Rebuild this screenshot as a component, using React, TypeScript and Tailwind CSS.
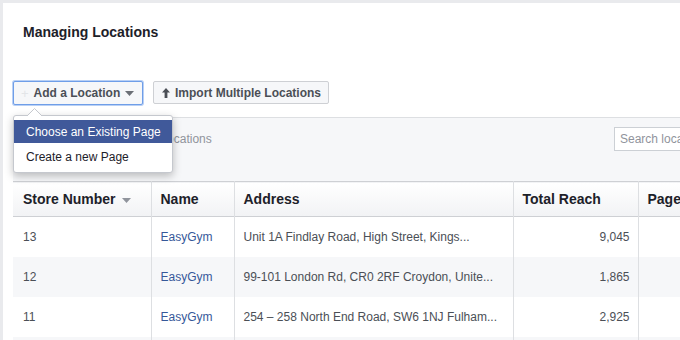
import React from 'react';

const font = { fontFamily: '"Liberation Sans", Arial, Helvetica, sans-serif' };

type Row = { store: string; name: string; address: string; reach: string };

const ROWS: Row[] = [
  { store: '13', name: 'EasyGym', address: 'Unit 1A Findlay Road, High Street, Kings...', reach: '9,045' },
  { store: '12', name: 'EasyGym', address: '99-101 London Rd, CR0 2RF Croydon, Unite...', reach: '1,865' },
  { store: '11', name: 'EasyGym', address: '254 – 258 North End Road, SW6 1NJ Fulham...', reach: '2,925' },
  { store: '10', name: 'EasyGym', address: 'Unit 3, Westgate Retail Park, Leeds...', reach: '3,112' },
];

const Caret = ({ className }: { className?: string }) => (
  <svg width="9" height="5" viewBox="0 0 9 5" className={className}>
    <path d="M0 0h9L4.5 5z" fill="currentColor" />
  </svg>
);

export default function App() {
  return (
    <div className="h-[340px] w-[680px] overflow-hidden bg-[#e9eaed] pl-[3px] pt-[3px]" style={font}>
      <div className="h-full w-[900px] bg-white pl-[10px]">
        {/* HEADER */}
        <div className="h-[78px] pl-[10px] pt-[20px]">
          <h1 className="text-[14px] font-bold leading-[18px] text-[#1d2129]">Managing Locations</h1>
        </div>

        {/* ACTIONS */}
        <div className="flex h-[24px] gap-[10px]">
          <div className="relative">
            <button className="flex h-[24px] w-[130px] items-center rounded-[2px] border border-[#6f9ee8] bg-[#f6f7f9] pl-[7px] text-[12px] font-bold text-[#4b4f56] shadow-[0_0_0_1px_#b9d0f5]">
              <span className="mr-[5px] text-[13px] font-normal leading-none text-[#e3e5e8]">+</span>
              Add a Location
              <Caret className="ml-[5px] mt-[1px] text-[#6b6f76]" />
            </button>

            {/* DROPDOWN */}
            <div className="absolute left-0 top-[34px] z-10 w-[160px] rounded-[3px] border border-[#c5c8ce] bg-white py-[4px] shadow-[0_3px_8px_rgba(0,0,0,0.25)]">
              <svg width="15" height="8" viewBox="0 0 15 8" className="absolute left-[13px] top-[-8px]">
                <path d="M0 8L7.5 0.5L15 8" fill="white" stroke="#c5c8ce" />
              </svg>
              <div className="flex h-[23px] items-center bg-[#40599a] pl-[12px] text-[12px] text-white">
                Choose an Existing Page
              </div>
              <div className="mt-[2px] flex h-[23px] items-center pl-[12px] text-[12px] text-[#1d2129]">
                Create a new Page
              </div>
            </div>
          </div>

          <button className="flex h-[23px] w-[176px] items-center rounded-[2px] border border-[#ced0d4] bg-[#f6f7f9] pl-[8px] text-[12px] font-bold text-[#4b4f56]">
            <svg width="8" height="10" viewBox="0 0 8 10" className="mr-[5px]">
              <path d="M4 0L8 4.5H5.4V10H2.6V4.5H0z" fill="#4b4f56" />
            </svg>
            Import Multiple Locations
          </button>
        </div>

        {/* FILTER BAR */}
        <div className="mt-[12px] flex h-[64px] items-start border-t border-[#dddfe2] bg-[#f6f7f9] pt-[9px]">
          <div className="w-[601px] shrink-0 pl-[34px] pt-[4px] text-[12px] leading-[16px] text-[#90949c]">
            Showing 1 - 13 of 13 Locations
          </div>
          <input
            placeholder="Search locations"
            className="h-[24px] w-[170px] border border-[#ccd0d5] bg-white px-[5px] text-[12px] text-[#1d2129] outline-none placeholder:text-[#90949c]"
            style={font}
          />
        </div>

        {/* TABLE */}
        <table className="table-fixed border-collapse text-[12px] text-[#4b4f56]">
          <colgroup>
            <col className="w-[138px]" />
            <col className="w-[83px]" />
            <col className="w-[279px]" />
            <col className="w-[125px]" />
            <col className="w-[140px]" />
          </colgroup>
          <thead>
            <tr className="h-[35px] border-y border-[#ced0d4] bg-gradient-to-b from-white to-[#f2f3f5] text-left text-[14px] font-bold text-[#1d2129]">
              <th className="border-r border-[#dddfe2] pl-[10px]">
                <span className="flex items-center">
                  Store Number
                  <Caret className="ml-[6px] mt-[2px] text-[#90949c]" />
                </span>
              </th>
              <th className="border-r border-[#dddfe2] pl-[9px]">Name</th>
              <th className="border-r border-[#dddfe2] pl-[9px]">Address</th>
              <th className="border-r border-[#dddfe2] pl-[9px]">Total Reach</th>
              <th className="pl-[9px]">Page</th>
            </tr>
          </thead>
          <tbody>
            {ROWS.map((r, i) => (
              <tr key={r.store} className={`h-[40px] ${i % 2 === 1 ? 'bg-[#f6f7f9]' : 'bg-white'}`}>
                <td className="border-r border-[#dddfe2] pl-[10px]">{r.store}</td>
                <td className="border-r border-[#dddfe2] pl-[9px] text-[#365899]">{r.name}</td>
                <td className="border-r border-[#dddfe2] pl-[9px]">{r.address}</td>
                <td className="border-r border-[#dddfe2] pr-[8px] text-right">{r.reach}</td>
                <td className="pl-[9px]"></td>
              </tr>
            ))}
          </tbody>
        </table>
      </div>
    </div>
  );
}
